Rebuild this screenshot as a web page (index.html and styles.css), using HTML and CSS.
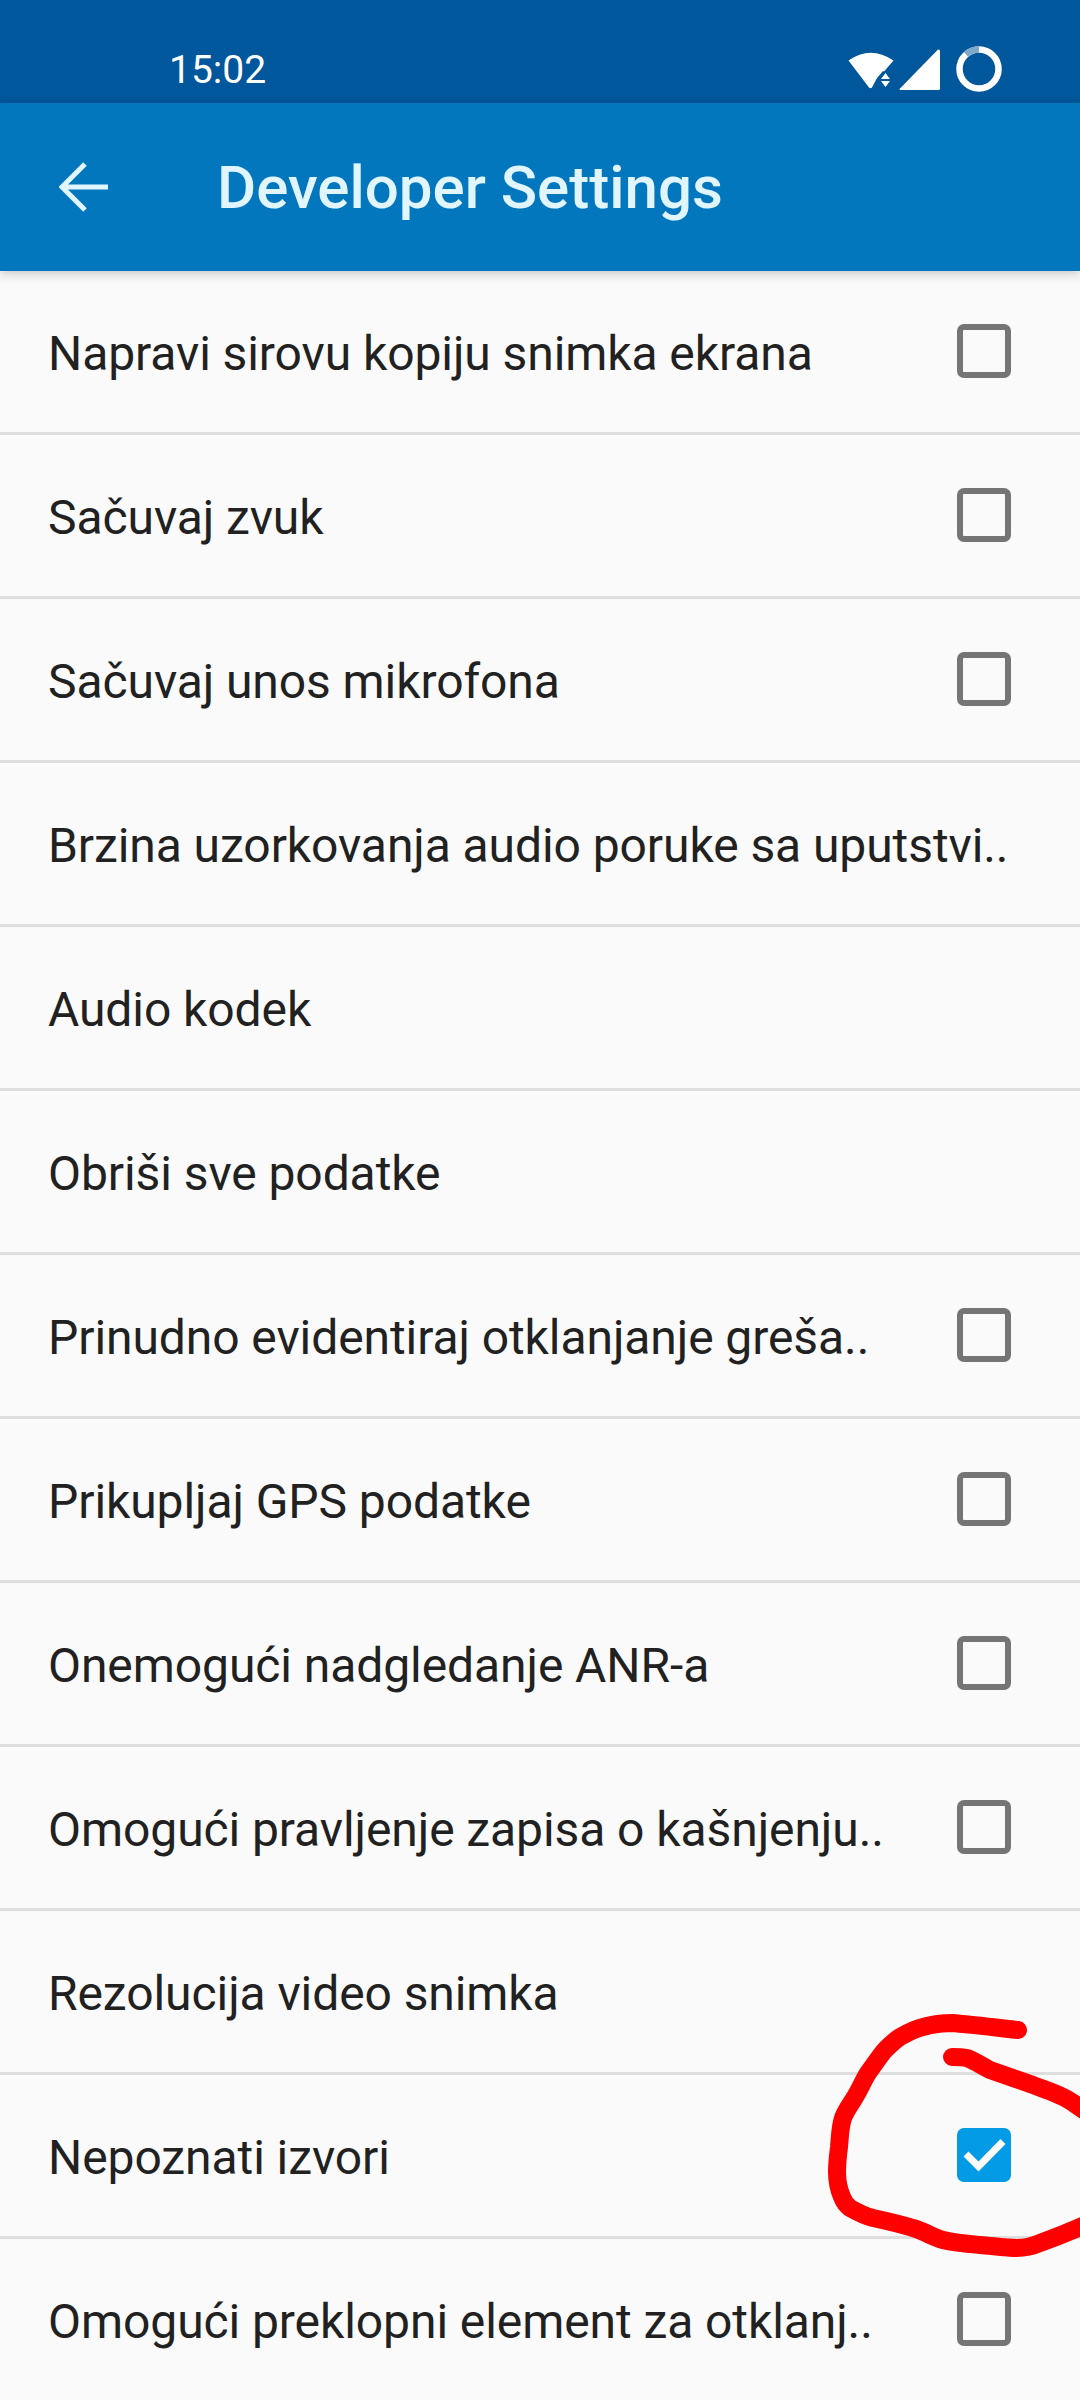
FILE: index.html
```html
<!DOCTYPE html>
<html lang="sr">
<head>
    <meta charset="UTF-8">
    <title>Developer Settings</title>
    <link rel="stylesheet" href="styles.css">
</head>
<body>
<div class="screen">
    <div class="statusBar">
        <span class="time">15:02</span>
        <div class="statusIcons">
            <svg class="icoWifi" width="46" height="38" viewBox="0 0 46 38">
                <path d="M0.5 9.5Q22.5 -6 45.5 9.5L36 20.5L35 20L29 27L24 36.5Q22.5 38 21 36.5Z" fill="#fff"/>
                <path d="M37.5 22L42 28H33ZM33 30H42L37.5 36Z" fill="#fff"/>
            </svg>
            <svg class="icoSignal" width="41" height="41" viewBox="0 0 41 41">
                <path d="M39 0.5Q41 0 41 2V39.5Q41 41 39.5 41H1Q0 41 1 39.5Z" fill="#fff"/>
            </svg>
            <svg class="icoBattery" width="46" height="46" viewBox="0 0 46 46">
                <circle cx="23" cy="23" r="19.5" fill="none" stroke="#fff" stroke-width="6.5"/>
                <path d="M23 3.5A19.5 19.5 0 0 0 10 8.5" fill="none" stroke="#7fa8cb" stroke-width="6.5"/>
            </svg>
        </div>
    </div>
    <div class="toolBar">
        <svg class="backIco" width="50" height="50" viewBox="0 0 50 50">
            <path d="M49 25H4M26 2L3 25L26 48" fill="none" stroke="#e1f5fe" stroke-width="5"/>
        </svg>
        <h1 class="title">Developer Settings</h1>
    </div>
    <ul class="list">
        <li><span>Napravi sirovu kopiju snimka ekrana</span><i class="box"></i></li>
        <li><span>Sačuvaj zvuk</span><i class="box"></i></li>
        <li><span>Sačuvaj unos mikrofona</span><i class="box"></i></li>
        <li><span>Brzina uzorkovanja audio poruke sa uputstvi..</span></li>
        <li><span>Audio kodek</span></li>
        <li><span>Obriši sve podatke</span></li>
        <li><span>Prinudno evidentiraj otklanjanje greša..</span><i class="box"></i></li>
        <li><span>Prikupljaj GPS podatke</span><i class="box"></i></li>
        <li><span>Onemogući nadgledanje ANR-a</span><i class="box"></i></li>
        <li><span>Omogući pravljenje zapisa o kašnjenju..</span><i class="box"></i></li>
        <li><span>Rezolucija video snimka</span></li>
        <li>
            <span>Nepoznati izvori</span>
            <i class="box on">
                <svg width="54" height="54" viewBox="0 0 54 54">
                    <path d="M9 26L21.5 38.5L46 13.5" fill="none" stroke="#fff" stroke-width="7"/>
                </svg>
            </i>
        </li>
        <li><span>Omogući preklopni element za otklanj..</span><i class="box"></i></li>
    </ul>
    <!-- crvena oznaka preko liste -->
    <svg class="scribble" width="1080" height="2400" viewBox="0 0 1080 2400">
        <path d="M1018 2030C1000 2028 975 2025 953 2023C940 2023 930 2025 923 2027C915 2029 907 2033 900 2037C894 2041 890 2045 885 2050C879 2057 874 2065 868 2073C863 2081 860 2089 855 2097C851 2104 846 2110 843 2118C840 2127 840 2137 839 2147C838 2155 837 2163 837 2172C837 2181 839 2190 842 2197C844 2202 846 2205 850 2208C857 2212 865 2216 873 2218C887 2221 900 2224 913 2228C924 2231 932 2237 943 2240C955 2243 968 2244 980 2245C993 2246 1005 2248 1017 2248C1025 2248 1033 2246 1040 2243C1054 2238 1067 2233 1085 2225" fill="none" stroke="#fe0000" stroke-width="18" stroke-linecap="round" stroke-linejoin="round"/>
        <path d="M952 2057C958 2057 962 2057 967 2058C975 2061 982 2066 990 2070C1004 2075 1019 2080 1033 2085C1043 2089 1053 2092 1063 2097C1070 2100 1076 2105 1085 2111" fill="none" stroke="#fe0000" stroke-width="18" stroke-linecap="round" stroke-linejoin="round"/>
    </svg>
</div>
</body>
</html>
```
FILE: styles.css
```css
*{margin: 0;padding: 0;box-sizing: border-box}
ul{list-style: none}
html,body{height: 2400px;overflow: hidden}
body{background: #fafafa;font-family: Roboto, "Noto Sans", sans-serif;color: #212121}
.screen{width: 1080px;height: 2400px;position: relative;overflow: hidden}

.statusBar{height: 103px;background: #01579b;display: flex;justify-content: space-between;padding: 46px 78px 0 169px;color: #fff}
.time{font-size: 39px;line-height: 46px;margin-top: 1px}
.statusIcons{display: flex;align-items: flex-start;gap: 5px}
.icoWifi{margin-top: 5px}
.icoSignal{margin-top: 3px}
.icoBattery{margin-left: 11px}

.toolBar{height: 168px;background: #0277bd;display: flex;align-items: center;padding-left: 59px;box-shadow: 0 3px 10px rgba(0,0,0,.2);position: relative}
.backIco{margin-right: 108px}
.title{font-size: 60px;font-weight: 500;color: #e1f5fe;line-height: 64px;padding-top: 2px}

.list li{height: 164px;border-bottom: 3px solid #dedede;display: flex;align-items: center;justify-content: space-between;padding: 0 69px 2px 48px;font-size: 48px;letter-spacing: -.08px;white-space: nowrap}
.list span{padding-top: 5px}
.box{width: 54px;height: 54px;border: 6px solid #757575;border-radius: 7px;display: block}
.box.on{border: 0;background: #039be5}
.box svg{display: block}

.scribble{position: absolute;left: 0;top: 0}
```
